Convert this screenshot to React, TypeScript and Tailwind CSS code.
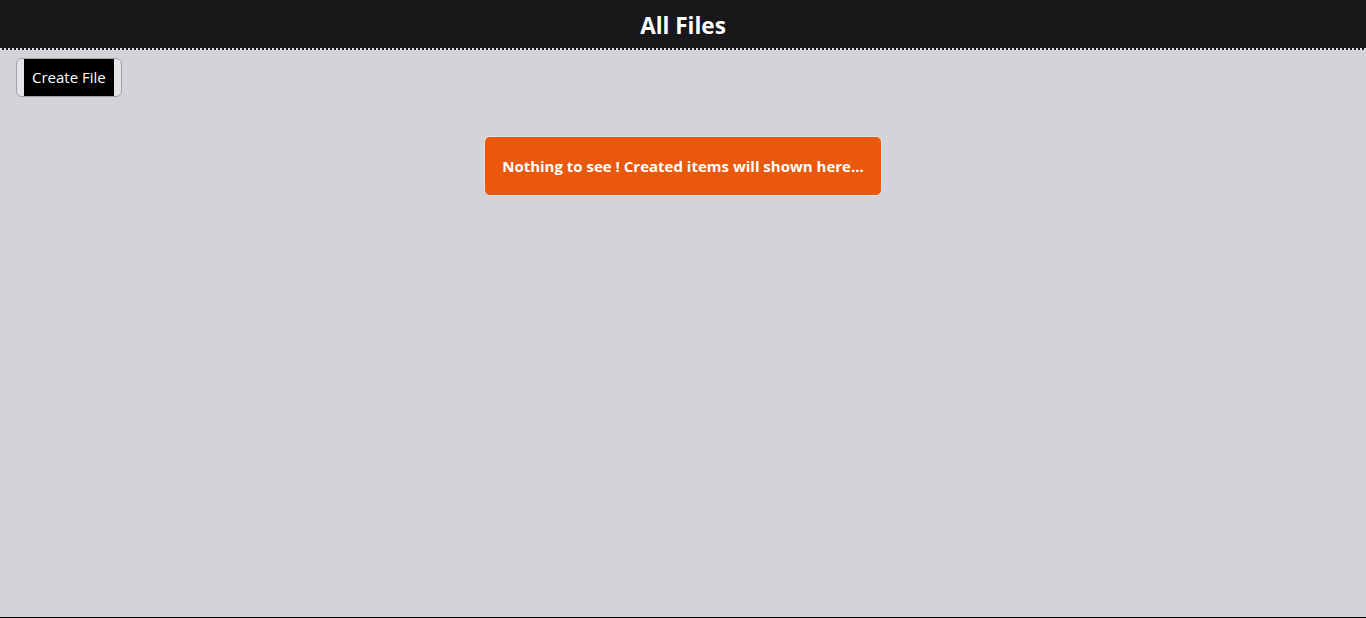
export default function App() {
  return (
    <div
      className="flex min-h-screen flex-col border-b border-black bg-[#d4d4d8]"
      style={{ fontFamily: '"Open Sans", "Noto Sans", sans-serif' }}
    >
      <header className="flex h-[50px] items-center justify-center border-b-2 border-dotted border-zinc-200 bg-[#18181b]">
        <h1 className="pt-[3px] text-[22.5px] leading-[30px] font-bold text-white">All Files</h1>
      </header>

      <div className="px-4 pt-2">
        <button
          type="button"
          className="flex rounded-md border border-zinc-400 bg-zinc-200 px-[7px]"
        >
          <span className="bg-black px-2 py-[7px] text-[15px] leading-[23px] text-white">
            Create File
          </span>
        </button>
      </div>

      <div className="flex justify-center pt-[39px]">
        <div className="w-[398px] rounded-md border border-zinc-200 bg-[#ea580c] py-[18px] text-center text-[15px] font-bold leading-[22px] text-white">
          Nothing to see ! Created items will shown here...
        </div>
      </div>
    </div>
  );
}
